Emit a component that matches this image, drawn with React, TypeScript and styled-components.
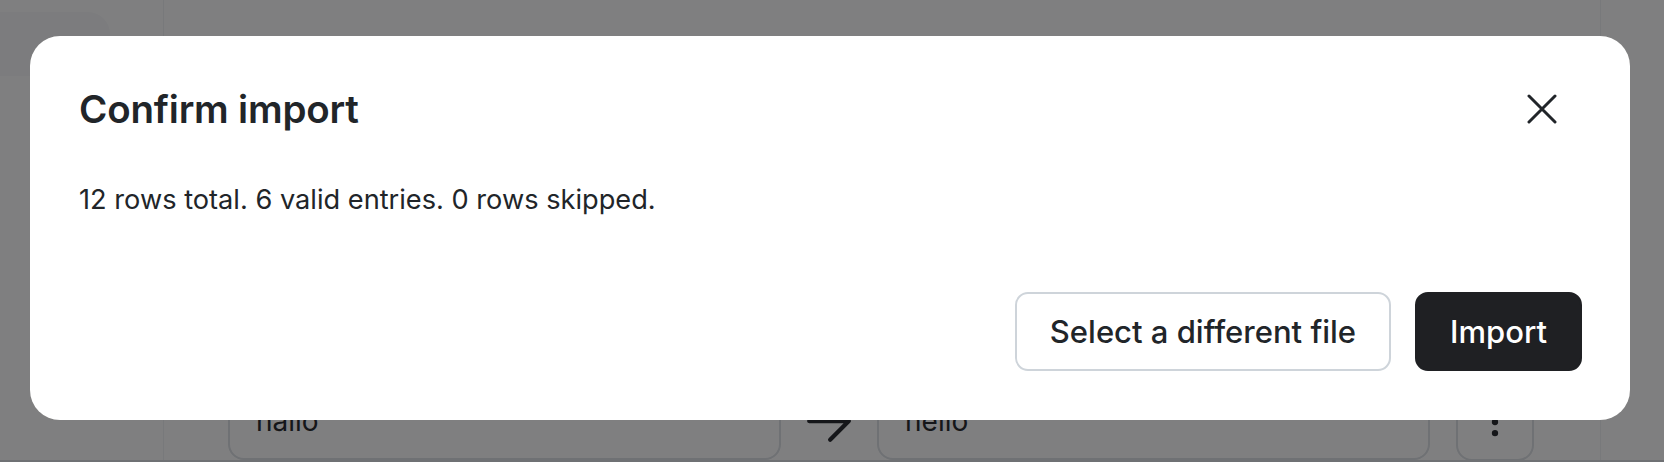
import React from "react";
import styled, { createGlobalStyle } from "styled-components";

const GlobalStyle = createGlobalStyle`
  html, body {
    margin: 0;
    padding: 0;
    background: #ffffff;
  }
  body {
    font-family: Inter, "Noto Sans", "Liberation Sans", sans-serif;
    color: #212529;
    -webkit-font-smoothing: antialiased;
  }
  * {
    box-sizing: border-box;
  }
`;

const App = () => {
  return (
    <>
      <GlobalStyle />
      <Page>
        <Sidebar>
          <NavItem />
        </Sidebar>
        <Main>
          <RuleRow>
            <Field>hallo</Field>
            <ArrowIcon />
            <Field>hello</Field>
            <MenuButton>
              <DotsIcon />
            </MenuButton>
          </RuleRow>
        </Main>
        <Gutter />
      </Page>

      <Overlay>
        <Modal role="dialog" aria-labelledby="confirm-title">
          <Header>
            <Title id="confirm-title">Confirm import</Title>
            <CloseButton aria-label="Close">
              <CloseIcon />
            </CloseButton>
          </Header>
          <Body>12 rows total. 6 valid entries. 0 rows skipped.</Body>
          <Footer>
            <Button $variant="default">Select a different file</Button>
            <Button $variant="filled">Import</Button>
          </Footer>
        </Modal>
      </Overlay>
    </>
  );
};

/** Icons */
const CloseIcon = () => (
  <svg width="30" height="30" viewBox="0 0 30 30" fill="none">
    <path
      d="M2 2L28 28M28 2L2 28"
      stroke="currentColor"
      strokeWidth="3"
      strokeLinecap="round"
    />
  </svg>
);

const ArrowIcon = () => (
  <ArrowSvg width="68" height="68" viewBox="0 0 24 24" fill="none">
    <path
      d="M5 12h14M12.4 5.4 19 12l-6.6 6.6"
      stroke="currentColor"
      strokeWidth="1.5"
      strokeLinecap="round"
      strokeLinejoin="round"
    />
  </ArrowSvg>
);

const DotsIcon = () => (
  <svg width="38" height="38" viewBox="0 0 24 24" fill="currentColor">
    <circle cx="12" cy="5" r="2" />
    <circle cx="12" cy="12" r="2" />
    <circle cx="12" cy="19" r="2" />
  </svg>
);

/** Styles */
const Page = styled.div`
  width: 1664px;
  height: 462px;
  display: flex;
  overflow: hidden;
  background: #ffffff;
  border-bottom: 2px solid #dee2e6;
`;

const Sidebar = styled.aside`
  width: 164px;
  flex-shrink: 0;
  padding-top: 12px;
  border-right: 1px solid #f1f3f5;
`;

const NavItem = styled.div`
  width: 130px;
  height: 64px;
  margin-left: -20px;
  border-radius: 22px;
  background: #f8f9fa;
`;

const Main = styled.main`
  flex: 1;
  display: flex;
  flex-direction: column;
  justify-content: flex-end;
  padding: 0 0 0 64px;
`;

const RuleRow = styled.div`
  display: flex;
  align-items: center;
  height: 78px;
`;

const Field = styled.div`
  width: 553px;
  height: 78px;
  display: flex;
  align-items: center;
  padding: 0 26px;
  border: 2px solid #dee2e6;
  border-radius: 16px;
  font-size: 28px;
  color: #2b2d31;
`;

const ArrowSvg = styled.svg`
  color: #2b2d31;
  margin: 0 14px;
`;

const MenuButton = styled.button`
  width: 78px;
  height: 78px;
  margin: 2px 0 0 26px;
  display: flex;
  align-items: center;
  justify-content: center;
  border: 2px solid #dee2e6;
  border-radius: 16px;
  background: #ffffff;
  color: #2b2d31;
  padding: 0;
`;

const Gutter = styled.div`
  width: 64px;
  flex-shrink: 0;
  border-left: 1px solid #f1f3f5;
`;

const Overlay = styled.div`
  position: fixed;
  inset: 0;
  background: rgba(0, 0, 2, 0.5);
  padding: 36px 0 0 30px;
`;

const Modal = styled.section`
  width: 1600px;
  height: 384px;
  background: #ffffff;
  border-radius: 30px;
  padding: 50px 48px 49px 50px;
  display: flex;
  flex-direction: column;
`;

const Header = styled.header`
  display: flex;
  align-items: center;
  justify-content: space-between;
  height: 46px;
`;

const Title = styled.h2`
  margin: 0 0 0 -1px;
  font-size: 38.5px;
  line-height: 46px;
  font-weight: 600;
  letter-spacing: -0.2px;
  color: #212529;
`;

const CloseButton = styled.button`
  width: 56px;
  height: 56px;
  margin-right: 12px;
  display: flex;
  align-items: center;
  justify-content: center;
  border: none;
  background: transparent;
  color: #212529;
  padding: 0;
`;

const Body = styled.p`
  margin: 47px 0 0 -1px;
  font-size: 27.2px;
  line-height: 42px;
  color: #212529;
`;

const Footer = styled.footer`
  margin-top: auto;
  display: flex;
  justify-content: flex-end;
  gap: 24px;
`;

const Button = styled.button<{ $variant: "default" | "filled" }>`
  height: 79px;
  padding: 0 33px;
  border-radius: 13px;
  font-family: inherit;
  font-size: 31px;
  font-weight: 500;
  border: 2px solid ${(p) => (p.$variant === "filled" ? "#1f2023" : "#ced4da")};
  background: ${(p) => (p.$variant === "filled" ? "#1f2023" : "#ffffff")};
  color: ${(p) => (p.$variant === "filled" ? "#ffffff" : "#212529")};
`;

/** Exports */
export default App;
